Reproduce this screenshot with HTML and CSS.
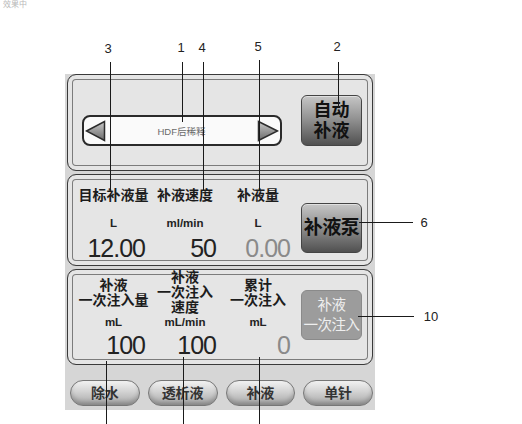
FILE: index.html
```html
<!DOCTYPE html>
<html lang="zh">
<head>
  <meta charset="UTF-8">
  <title>补液设置</title>
  <meta name="viewport" content="width=device-width, initial-scale=1.0" />
  <link rel="stylesheet" href="styles.css">
</head>
<body>
  <div class="figure">
    <div class="caption">效果中</div>

    <div class="panel">
      <!-- mode selector -->
      <section class="box box-mode">
        <div class="selector">
          <svg class="arrow" width="21" height="22" viewBox="0 0 21 22">
            <defs>
              <linearGradient id="gl" x1="0" y1="0" x2="0" y2="1">
                <stop offset="0" stop-color="#c8c8c8"/>
                <stop offset="1" stop-color="#6a6a6a"/>
              </linearGradient>
            </defs>
            <polygon points="1.5,11 19.5,1.5 19.5,20.5" fill="url(#gl)" stroke="#2b2b2b" stroke-width="1.5"/>
          </svg>
          <span class="mode">HDF后稀释</span>
          <svg class="arrow" width="22" height="22" viewBox="0 0 22 22">
            <defs>
              <linearGradient id="gr" x1="0" y1="0" x2="0" y2="1">
                <stop offset="0" stop-color="#c8c8c8"/>
                <stop offset="1" stop-color="#6a6a6a"/>
              </linearGradient>
            </defs>
            <polygon points="20.5,11 1.5,1.5 1.5,20.5" fill="url(#gr)" stroke="#2b2b2b" stroke-width="1.5"/>
          </svg>
        </div>
        <div class="btn btn-dark btn-auto">自动<br>补液</div>
      </section>

      <!-- substitution totals -->
      <section class="box box-fluid">
        <div class="readings">
          <div class="label">目标补液量</div>
          <div class="label">补液速度</div>
          <div class="label">补液量</div>
          <div class="unit">L</div>
          <div class="unit">ml/min</div>
          <div class="unit">L</div>
          <div class="value">12.00</div>
          <div class="value mid">50</div>
          <div class="value last">0.00</div>
        </div>
        <div class="btn btn-dark btn-pump">补液泵</div>
      </section>

      <!-- bolus -->
      <section class="box box-bolus">
        <div class="readings">
          <div class="label">补液<br>一次注入量</div>
          <div class="label">补液<br>一次注入<br>速度</div>
          <div class="label">累计<br>一次注入</div>
          <div class="unit">mL</div>
          <div class="unit">mL/min</div>
          <div class="unit">mL</div>
          <div class="value">100</div>
          <div class="value mid">100</div>
          <div class="value last">0</div>
        </div>
        <div class="btn btn-flat">补液<br>一次注入</div>
      </section>

      <div class="tabs">
        <div class="tab">除水</div>
        <div class="tab">透析液</div>
        <div class="tab">补液</div>
        <div class="tab">单针</div>
      </div>
    </div>

    <!-- callouts -->
    <span class="num n3">3</span>
    <span class="num n1">1</span>
    <span class="num n4">4</span>
    <span class="num n5">5</span>
    <span class="num n2">2</span>
    <span class="num n6">6</span>
    <span class="num n10">10</span>
    <i class="lead l3"></i>
    <i class="lead l1"></i>
    <i class="lead l4"></i>
    <i class="lead l5"></i>
    <i class="lead l2"></i>
    <i class="lead l6"></i>
    <i class="lead l10"></i>
    <i class="lead b1"></i>
    <i class="lead b2"></i>
    <i class="lead b3"></i>
  </div>
</body>
</html>
```

FILE: styles.css
```css
body { margin: 0; background: #fff; color: #1e1e1e; font-family: "Liberation Sans", "Noto Sans CJK SC", sans-serif; }

.figure { position: relative; width: 522px; height: 424px; overflow: hidden; }
.caption { position: absolute; left: 3px; top: 0; font-size: 8px; line-height: 9px; color: #b8b8b8; }

.panel {
  display: flex; flex-direction: column; gap: 3px;
  width: 310px; height: 410px; box-sizing: border-box;
  margin-left: 65px; padding: 74px 2px 2px 2px;
  background: linear-gradient(#fff 0 74px, #d6d6d6 74px);
}

.box {
  display: flex; box-sizing: border-box;
  background: #e5e5e5; border: 1px solid #3a3a3a; border-radius: 9px;
  box-shadow: inset 0 0 0 4px #e5e5e5, inset 0 0 0 5px #7c7c7c;
}
.box-mode { height: 97px; align-items: flex-end; padding: 0 0 24px 14px; gap: 19px; }
.box-fluid { height: 92px; padding: 10px 0 0 7px; gap: 3px; }
.box-bolus { height: 96px; padding: 0 0 0 7px; gap: 3px; }

.selector {
  width: 200px; height: 31px; box-sizing: border-box;
  display: flex; align-items: center; padding: 0 1px 0 1px;
  background: #fafafa; border: 2px solid #2a2a2a; border-radius: 8px;
}
.arrow { display: block; }
.mode { flex: 1; text-align: center; font-size: 9.5px; color: #6a6a6a; }

.btn { box-sizing: border-box; width: 61px; text-align: center; border-radius: 6px; }
.btn-dark {
  background: linear-gradient(#c6c6c6, #8e8e8e 50%, #505050);
  border: 1px solid #444; box-shadow: inset 0 1px 0 #e0e0e0;
  color: #111; font-weight: bold;
}
.btn-auto { height: 51px; font-size: 18px; line-height: 21px; padding-top: 4px; }
.btn-pump { height: 50px; margin-top: 18px; font-size: 19px; line-height: 48px; letter-spacing: -0.5px; white-space: nowrap; }
.btn-flat {
  height: 50px; margin-top: 20px; padding-top: 4px;
  background: #9c9c9c; border: 1px solid #8a8a8a;
  color: #efefef; font-size: 14.5px; line-height: 20px; white-space: nowrap; letter-spacing: -0.5px;
}

.readings { display: grid; grid-template-columns: 77px 66px 80px; align-content: start; }
.label { text-align: center; font-size: 14px; font-weight: bold; line-height: 20px; color: #1c1c1c; }
.unit { text-align: center; font-size: 11.5px; font-weight: bold; line-height: 16px; margin-top: 10px; color: #222; }
.value { text-align: right; padding-right: 7px; font-size: 25px; letter-spacing: -1px; line-height: 28px; margin-top: 3px; color: #222; }
.value.mid { padding-right: 2px; }
.value.last { padding-right: 8px; color: #8a8a8a; }

.box-bolus .readings { grid-template-rows: 45px auto auto; }
.box-bolus .label { align-self: center; line-height: 15px; }
.box-bolus .unit { margin-top: 0; line-height: 14px; }
.box-bolus .value { margin-top: 1px; line-height: 30px; }

.tabs { display: flex; gap: 8px; margin-top: 12px; padding-left: 3px; }
.tab {
  width: 70px; height: 26px; box-sizing: border-box; border-radius: 13px;
  border: 1px solid #767676;
  background: linear-gradient(#f2f2f2, #d2d2d2 45%, #a6a6a6);
  box-shadow: inset 0 -3px 4px rgba(0, 0, 0, 0.2);
  text-align: center; line-height: 24px; font-size: 14px; font-weight: bold; color: #333;
}

.num { position: absolute; width: 16px; text-align: center; font-size: 13px; line-height: 13px; color: #222; }
.n3 { left: 100px; top: 42px; }
.n1 { left: 173px; top: 41px; }
.n4 { left: 194px; top: 41px; }
.n5 { left: 250px; top: 40px; }
.n2 { left: 329px; top: 40px; }
.n6 { left: 416px; top: 216px; }
.n10 { left: 422px; top: 310px; width: 18px; }

.lead { position: absolute; background: #1a1a1a; width: 1px; }
.l3 { left: 110px; top: 62px; height: 130px; }
.l1 { left: 182px; top: 62px; height: 60px; }
.l4 { left: 203px; top: 62px; height: 128px; }
.l5 { left: 259px; top: 60px; height: 130px; }
.l2 { left: 338px; top: 62px; height: 45px; }
.l6 { left: 359px; top: 222px; width: 54px; height: 1px; }
.l10 { left: 358px; top: 316px; width: 56px; height: 1px; }
.b1 { left: 106px; top: 361px; height: 63px; }
.b2 { left: 183px; top: 357px; height: 67px; }
.b3 { left: 259px; top: 357px; height: 67px; }
```
